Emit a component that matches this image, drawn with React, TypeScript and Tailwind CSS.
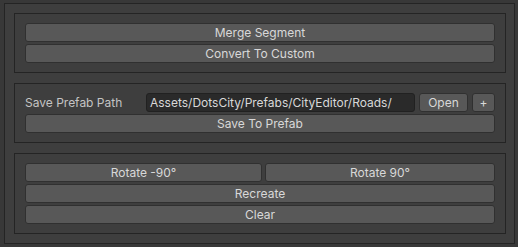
import React from "react"

const btn =
  "flex h-[19px] items-center justify-center rounded-[3px] border border-[#303030] bg-[#585858] text-[12px] leading-none text-[#d8d8d8]"

const Panel: React.FC<{ children: React.ReactNode }> = ({ children }) => (
  <div className="flex flex-col gap-[2px] border border-[#242424] bg-[#3e3e3e] px-[10px] py-[9px]">
    {children}
  </div>
)

export default function App() {
  return (
    <div
      className="h-[247px] w-[518px] bg-[#383838] pl-[4px] pt-[3px]"
      style={{ fontFamily: "Inter, 'Noto Sans', sans-serif" }}
    >
      <div className="flex h-[241px] w-[511px] flex-col gap-[10px] border border-[#242424] bg-[#3e3e3e] pl-[9px] pr-[8px] pt-[9px]">
        {/* segment actions */}
        <Panel>
          <div className={btn}>Merge Segment</div>
          <div className={btn}>Convert To Custom</div>
        </Panel>

        {/* prefab */}
        <Panel>
          <div className="flex h-[19px] items-center gap-[4px]">
            <div className="w-[117px] text-[12px] text-[#c4c4c4]">Save Prefab Path</div>
            <div className="flex h-[19px] flex-1 items-center rounded-[3px] border border-[#212121] bg-[#2a2a2a] px-[3px] text-[12px] text-[#d8d8d8]">
              Assets/DotsCity/Prefabs/CityEditor/Roads/
            </div>
            <div className={btn + " w-[49px]"}>Open</div>
            <div className={btn + " w-[23px]"}>+</div>
          </div>
          <div className={btn}>Save To Prefab</div>
        </Panel>

        {/* transform */}
        <Panel>
          <div className="flex gap-[3px]">
            <div className={btn + " w-[237px]"}>Rotate -90°</div>
            <div className={btn + " flex-1"}>Rotate 90°</div>
          </div>
          <div className={btn}>Recreate</div>
          <div className={btn}>Clear</div>
        </Panel>
      </div>
    </div>
  )
}
